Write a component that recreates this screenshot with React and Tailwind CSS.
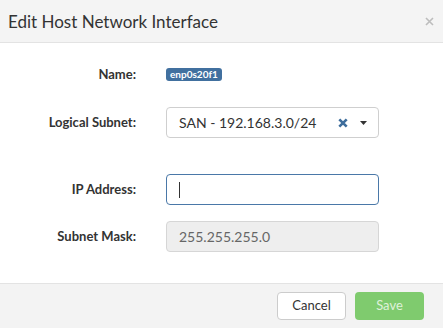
import React from "react";

const Label = ({ children }) => (
  <div className="w-[136px] shrink-0 text-right pr-0 text-[13px] font-bold text-[#333]">
    {children}
  </div>
);

export default function App() {
  return (
    <div className="w-[443px] h-[328px] flex flex-col bg-white font-['Lato',sans-serif] text-[#333]">
      {/* header */}
      <div className="h-[43px] shrink-0 flex items-center justify-between bg-[#f4f4f4] border-b border-[#e3e3e3] pl-2 pr-[9px]">
        <h1 className="text-[17px] text-[#333] leading-none">Edit Host Network Interface</h1>
        <svg width="9" height="9" viewBox="0 0 9 9" className="text-[#bdbdbd]">
          <path d="M1 1 L8 8 M8 1 L1 8" stroke="currentColor" strokeWidth="1.6" />
        </svg>
      </div>

      {/* body */}
      <div className="flex-1 flex flex-col pt-[25px]">
        <div className="h-[13px] flex items-center gap-[30px]">
          <Label>Name:</Label>
          <span className="h-[13px] px-[4px] rounded-[3px] bg-[#41709f] text-white text-[10px] font-bold leading-[13px]">
            enp0s20f1
          </span>
        </div>

        <div className="mt-[26px] h-[31px] flex items-center gap-[30px]">
          <Label>Logical Subnet:</Label>
          <div className="w-[213px] h-[31px] flex items-center border border-[#cfcfcf] rounded-[4px] pl-[12px] pr-[11px]">
            <span className="flex-1 text-[14px] text-[#333]">SAN - 192.168.3.0/24</span>
            <svg width="10" height="10" viewBox="0 0 10 10" className="text-[#3e6d9c] mr-[12px]">
              <path d="M1.3 1.3 L8.7 8.7 M8.7 1.3 L1.3 8.7" stroke="currentColor" strokeWidth="2.6" />
            </svg>
            <svg width="7" height="4" viewBox="0 0 7 4" className="text-[#333]">
              <path d="M0 0 H7 L3.5 4 Z" fill="currentColor" />
            </svg>
          </div>
        </div>

        <div className="mt-[36px] h-[31px] flex items-center gap-[30px]">
          <Label>IP Address:</Label>
          <div className="w-[213px] h-[31px] flex items-center border border-[#4a78a8] rounded-[4px] pl-[12px]">
            <span className="w-px h-[16px] bg-[#333]" />
          </div>
        </div>

        <div className="mt-[16px] h-[31px] flex items-center gap-[30px]">
          <Label>Subnet Mask:</Label>
          <div className="w-[213px] h-[31px] flex items-center border border-[#d6d6d6] bg-[#eeeeee] rounded-[4px] pl-[12px] text-[14px] text-[#666]">
            255.255.255.0
          </div>
        </div>
      </div>

      {/* footer */}
      <div className="h-[45px] shrink-0 flex items-center justify-end gap-[9px] bg-[#f3f3f3] border-t border-[#e3e3e3] pr-[19px]">
        <button className="w-[69px] h-[28px] rounded-[4px] border border-[#cccccc] bg-white text-[13px] text-[#333]">
          Cancel
        </button>
        <button className="w-[69px] h-[28px] rounded-[4px] bg-[#7fcb6e] text-[13px] text-white/75">
          Save
        </button>
      </div>
    </div>
  );
}
